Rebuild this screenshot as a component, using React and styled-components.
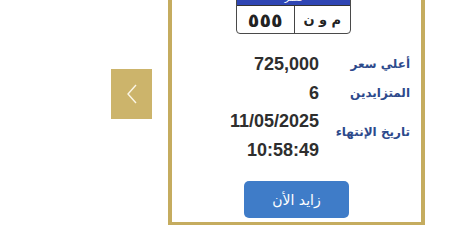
import React from 'react';
import styled, { createGlobalStyle } from 'styled-components';

const GlobalStyle = createGlobalStyle`
  html, body {
    margin: 0;
    padding: 0;
    background: #ffffff;
    overflow: hidden;
  }
  body {
    width: 450px;
    height: 225px;
    font-family: "Liberation Sans", Arial, sans-serif;
  }
`;

const Page = styled.div`
  display: flex;
  align-items: center;
  gap: 16px;
  margin-top: -38px;
  padding-left: 111px;
`;

const ArrowButton = styled.button`
  width: 41px;
  height: 50px;
  padding: 0;
  border: none;
  background: #ccb46b;
  display: flex;
  align-items: center;
  justify-content: center;
  cursor: pointer;
`;

const Card = styled.div`
  width: 249px;
  height: 256px;
  border: 4px solid #c5ac5f;
  background: #ffffff;
  display: flex;
  flex-direction: column;
  align-items: center;
  box-sizing: content-box;
`;

const Plate = styled.div`
  margin-top: 19px;
  margin-right: 6px;
  width: 113px;
  border: 1px solid #4a4a4a;
  border-radius: 4px;
  overflow: hidden;
  direction: rtl;
`;

const PlateHeader = styled.div`
  height: 19px;
  background: #2f46b4;
  color: #ffffff;
  font-family: "DejaVu Sans", sans-serif;
  font-size: 9px;
  line-height: 24px;
  text-align: center;
  border-bottom: 1px solid #333;
`;

const PlateBody = styled.div`
  display: grid;
  grid-template-columns: 1fr 1fr;
  height: 27px;
`;

const PlateCell = styled.div`
  display: flex;
  align-items: center;
  justify-content: center;
  font-family: "DejaVu Sans", sans-serif;
  font-weight: bold;
  font-size: ${(props) => props.$size}px;
  letter-spacing: ${(props) => props.$spacing}px;
  color: #222;
  border-left: ${(props) => (props.$divider ? '1px solid #444' : 'none')};
`;

const Info = styled.div`
  direction: rtl;
  display: grid;
  grid-template-columns: 91px auto;
  align-self: stretch;
  padding-right: 11px;
  margin-top: 15px;
`;

const Label = styled.div`
  font-family: "DejaVu Sans", sans-serif;
  font-weight: bold;
  font-size: 12px;
  color: #2d4a8c;
  line-height: 20px;
  padding-top: ${(props) => props.$top}px;
  white-space: nowrap;
`;

const Value = styled.div`
  font-family: "Liberation Sans", Arial, sans-serif;
  font-weight: bold;
  font-size: 18px;
  color: #2e2e2e;
  line-height: ${(props) => props.$line}px;
  direction: ltr;
  text-align: right;
`;

const BidButton = styled.button`
  margin-top: 16px;
  width: 105px;
  height: 37px;
  border: none;
  border-radius: 5px;
  background: #3f7cc8;
  color: #ffffff;
  font-family: "DejaVu Sans", sans-serif;
  font-size: 14px;
  cursor: pointer;
`;

function Chevron() {
  return (
    <svg width="14" height="22" viewBox="0 0 14 22">
      <path d="M11 2 L3 11 L11 20" fill="none" stroke="#fbf6e6" strokeWidth="1.4" />
    </svg>
  );
}

export default function App() {
  return (
    <>
      <GlobalStyle />
      <Page>
        <ArrowButton aria-label="السابق">
          <Chevron />
        </ArrowButton>
        <Card>
          <Plate>
            <PlateHeader>مصر</PlateHeader>
            <PlateBody>
              <PlateCell $size={13} $spacing={5} $divider>م و ن</PlateCell>
              <PlateCell $size={19} $spacing={1}>٥٥٥</PlateCell>
            </PlateBody>
          </Plate>
          <Info>
            <Label $top={5}>أعلي سعر</Label>
            <Value $line={30}>725,000</Value>
            <Label $top={4}>المتزايدين</Label>
            <Value $line={28}>6</Value>
            <Label $top={15}>تاريخ الإنتهاء</Label>
            <Value $line={29}>
              11/05/2025
              <br />
              10:58:49
            </Value>
          </Info>
          <BidButton>زايد الأن</BidButton>
        </Card>
      </Page>
    </>
  );
}
